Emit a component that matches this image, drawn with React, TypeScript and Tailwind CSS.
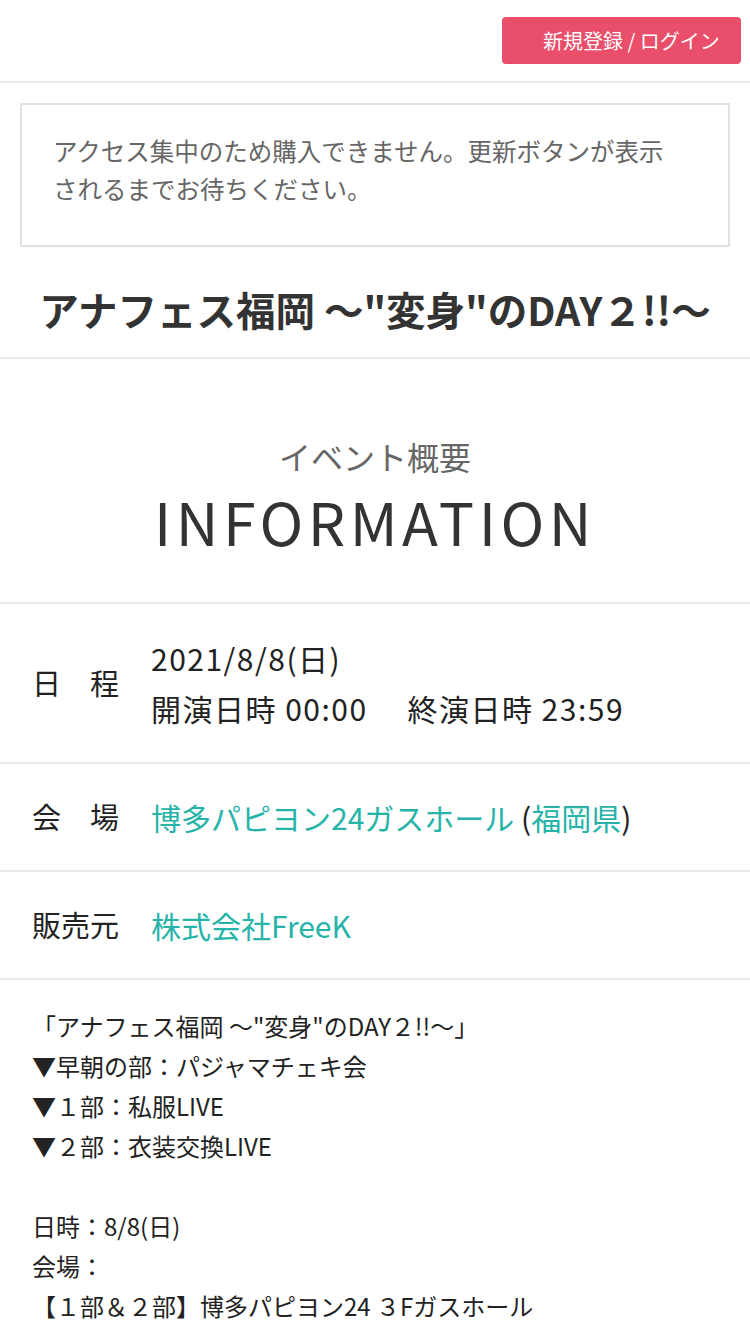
import React from 'react';

const font = { fontFamily: '"Noto Sans CJK JP", "Noto Sans", sans-serif' };

const InfoRow: React.FC<{ label: string; children: React.ReactNode; tall?: boolean }> = ({ label, children, tall }) => (
  <div className={`flex items-center border-b-2 border-[#e6eaea] px-8 ${tall ? 'h-[160px]' : 'h-[108px]'}`}>
    <div className="w-[119px] shrink-0 text-[29px] text-[#222]">{label}</div>
    <div className="text-[30px] leading-[50px] text-[#222]">{children}</div>
  </div>
);

export default function App() {
  return (
    <div className="min-h-[1334px] bg-white" style={font}>
      {/* ヘッダー */}
      <header className="flex h-[83px] items-center justify-end border-b-2 border-[#e6eaea] pr-[9px]">
        <button className="flex h-[47px] w-[239px] items-center rounded-[4px] bg-[#e94e6a] pl-[41px] text-[20px] text-white">
          新規登録 / ログイン
        </button>
      </header>

      {/* お知らせ */}
      <div className="mx-5 mt-[20px] border-2 border-[#dde3e3] pl-[31px] pr-4 pt-[27px] pb-[37px] text-[24.5px] leading-[38px] text-[#666]">
        アクセス集中のため購入できません。更新ボタンが表示
        <br />
        されるまでお待ちください。
      </div>

      <h1 className="flex h-[112px] items-center justify-center border-b-2 border-[#e6eaea] pt-[14px] text-[39.5px] font-bold text-[#333]">
        アナフェス福岡 ～"変身"のDAY２!!～
      </h1>

      {/* イベント概要 */}
      <section className="flex h-[245px] flex-col items-center justify-center border-b-2 border-[#e6eaea] pt-[26px]">
        <div className="text-[32px] text-[#666]">イベント概要</div>
        <div className="mt-[6px] text-[59px] leading-[70px] tracking-[4.5px] text-[#333]">INFORMATION</div>
      </section>

      <InfoRow label="日　程" tall>
        <div className="tracking-[1.5px]">2021/8/8(日)</div>
        <div className="tracking-[1.5px]">開演日時 00:00　 終演日時 23:59</div>
      </InfoRow>
      <InfoRow label="会　場">
        <span className="text-[#26b3a8]">博多パピヨン24ガスホール</span> (<span className="text-[#26b3a8]">福岡県</span>)
      </InfoRow>
      <InfoRow label="販売元">
        <span className="text-[#26b3a8]">株式会社FreeK</span>
      </InfoRow>

      {/* 詳細 */}
      <div className="px-8 pt-[26px] text-[24px] leading-[40px] text-[#222]">
        <p>「アナフェス福岡 ～"変身"のDAY２!!～」</p>
        <p>▼早朝の部：パジャマチェキ会</p>
        <p>▼１部：私服LIVE</p>
        <p>▼２部：衣装交換LIVE</p>
        <p>&nbsp;</p>
        <p>日時：8/8(日)</p>
        <p>会場：</p>
        <p>【１部＆２部】博多パピヨン24  ３Fガスホール</p>
      </div>
    </div>
  );
}
